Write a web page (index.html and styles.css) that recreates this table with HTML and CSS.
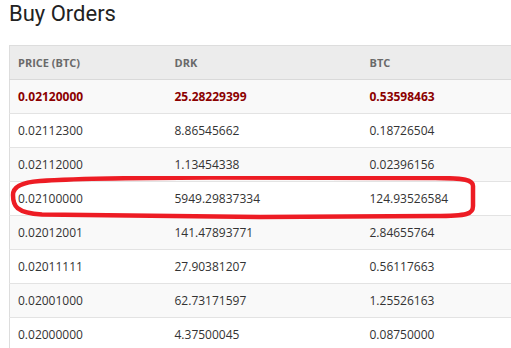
FILE: index.html
```html
<!DOCTYPE html>
<html>
<head>
<meta charset="utf-8">
<link rel="stylesheet" href="styles.css">
</head>
<body>
<div class="panel">
  <h1 class="title">Buy Orders</h1>
  <div class="table-wrap">
    <table class="orders">
      <colgroup>
        <col class="c1"><col class="c2"><col class="c3">
      </colgroup>
      <thead>
        <tr><th>PRICE (BTC)</th><th>DRK</th><th>BTC</th></tr>
      </thead>
      <tbody>
        <tr class="mine"><td>0.02120000</td><td>25.28229399</td><td>0.53598463</td></tr>
        <tr><td>0.02112300</td><td>8.86545662</td><td>0.18726504</td></tr>
        <tr><td>0.02112000</td><td>1.13454338</td><td>0.02396156</td></tr>
        <tr><td>0.02100000</td><td>5949.29837334</td><td>124.93526584</td></tr>
        <tr><td>0.02012001</td><td>141.47893771</td><td>2.84655764</td></tr>
        <tr><td>0.02011111</td><td>27.90381207</td><td>0.56117663</td></tr>
        <tr><td>0.02001000</td><td>62.73171597</td><td>1.25526163</td></tr>
        <tr><td>0.02000000</td><td>4.37500045</td><td>0.08750000</td></tr>
      </tbody>
    </table>
    <svg class="circle" width="480" height="50" viewBox="0 0 480 50">
      <path d="M30,5 C14,6 3,10 3,19 C3,30 6,37 32,38.5 L250,41 L425,40 C458,40 463,38 463,30 L463,10 C463,4 455,2 425,2 L200,1.5 Q70,2 30,5 Z" fill="none" stroke="#ed1c24" stroke-width="4.5" stroke-linejoin="round"/>
    </svg>
  </div>
</div>
</body>
</html>
```
FILE: styles.css
```css
html, body {
  margin: 0;
  padding: 0;
  background: #ffffff;
  overflow: hidden;
}
.panel {
  padding-left: 9px;
}
.title {
  margin: 0;
  padding-top: 0;
  font-family: Roboto, "Liberation Sans", sans-serif;
  font-weight: 400;
  font-size: 22px;
  line-height: 28px;
  color: #222;
  height: 45px;
}
.table-wrap {
  position: relative;
}
.orders {
  border-collapse: collapse;
  table-layout: fixed;
  width: 100%;
  font-family: "Open Sans", "Liberation Sans", sans-serif;
  font-size: 12px;
  color: #333;
  border-left: 1px solid #dddddd;
  border-top: 1px solid #dddddd;
}
.c1 { width: 157px; }
.c2 { width: 195px; }
.orders th,
.orders td {
  height: 33px;
  padding: 0 8px;
  text-align: left;
  vertical-align: middle;
  border-bottom: 1px solid #e3e3e3;
  white-space: nowrap;
}
.orders th {
  background: #ececec;
  font-size: 11px;
  font-weight: 700;
  color: #6a6a6a;
  border-bottom: 1px solid #d9d9d9;
}
.orders tbody tr:nth-child(odd) td {
  background: #f9f9f9;
}
.orders tr.mine td {
  color: #8b0000;
  font-weight: 700;
}
.circle {
  position: absolute;
  left: 1px;
  top: 131px;
}
```
